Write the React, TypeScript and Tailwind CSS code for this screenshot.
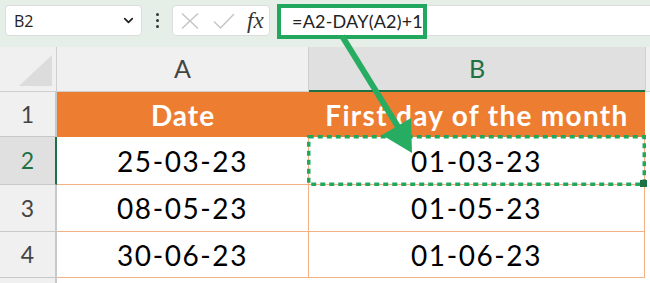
import { ChevronDown } from "lucide-react";

const rows = [
  { n: "3", a: "08-05-23", b: "01-05-23", h: "h-[47px]" },
  { n: "4", a: "30-06-23", b: "01-06-23", h: "h-[46px]" },
];

function Toolbar() {
  return (
    <div className="flex h-[47px] items-start bg-[#e6eee8] pl-[5px] pt-[5px]">
      {/* name box */}
      <div className="flex h-[31px] w-[137px] items-center justify-between rounded-[4px] border border-[#dcdcdc] bg-white pl-[8px] pr-[5px]">
        <span className="font-['Open_Sans',sans-serif] text-[16px] text-[#222]">B2</span>
        <ChevronDown className="h-[15px] w-[15px] text-[#222]" strokeWidth={2.75} />
      </div>
      {/* vertical dots */}
      <div className="flex h-[31px] w-[30px] flex-col items-center justify-center gap-[3px]">
        <span className="h-[3px] w-[3px] rounded-full bg-[#333]" />
        <span className="h-[3px] w-[3px] rounded-full bg-[#333]" />
        <span className="h-[3px] w-[3px] rounded-full bg-[#333]" />
      </div>
      {/* formula buttons */}
      <div className="flex h-[31px] w-[98px] items-center rounded-[4px] border border-[#dcdcdc] bg-white pl-[8px]">
        <svg width="18" height="16" viewBox="0 0 18 16" className="mr-[14px]">
          <path d="M1 0.5 L17 15.5 M17 0.5 L1 15.5" stroke="#c4c4c4" strokeWidth="1.4" fill="none" />
        </svg>
        <svg width="22" height="16" viewBox="0 0 22 16" className="mr-[12px]">
          <path d="M1 8.5 L7.5 15 L21 1" stroke="#c4c4c4" strokeWidth="1.4" fill="none" />
        </svg>
        <span className="font-['Liberation_Serif',serif] text-[23px] italic leading-none text-[#333]">fx</span>
      </div>
      {/* formula input */}
      <div className="relative ml-[8px] flex h-[31px] flex-1 items-center border-y border-[#dcdcdc] bg-white">
        <div className="absolute -top-[2px] left-[-1px] flex h-[35px] w-[150px] items-center border-[4px] border-[#22a85e] pl-[11px]">
          <span className="font-['Lato',sans-serif] text-[18px] tracking-[0.2px] text-[#222]">=A2-DAY(A2)+1</span>
        </div>
      </div>
    </div>
  );
}

function Selection() {
  return (
    <svg className="pointer-events-none absolute -left-[2px] -top-[2px] h-[52px] w-[340px]" viewBox="0 0 340 52">
      <rect x="1.75" y="1.75" width="335.5" height="47.5" fill="none" stroke="#22a85e" strokeWidth="3.5" strokeDasharray="5 4" />
      <rect x="333" y="45" width="7" height="7" fill="#1e7145" />
    </svg>
  );
}

export default function App() {
  return (
    <div className="relative h-[283px] w-[650px] overflow-hidden bg-white">
      <Toolbar />
      <div className="grid grid-cols-[57px_252px_336px_1fr] font-['Lato',sans-serif]">
        {/* column headers */}
        <div className="relative h-[45px] border-r border-b border-[#cfcfcf] bg-[#f0f0f0]">
          <svg className="absolute right-[4px] bottom-[5px]" width="33" height="31" viewBox="0 0 33 31">
            <polygon points="33,0 33,31 0,31" fill="#dcdcdc" />
          </svg>
        </div>
        <div className="flex h-[45px] items-center justify-center border-r border-b border-[#cfcfcf] bg-[#f0f0f0] text-[25px] text-[#444]">
          A
        </div>
        <div className="flex h-[45px] items-center justify-center border-b-[2px] border-[#1e7145] bg-[#e0e0e0] text-[25px] text-[#1e7145]">
          B
        </div>
        <div className="h-[45px] border-b border-l border-[#cfcfcf] bg-[#f0f0f0]" />

        {/* row 1 */}
        <div className="flex h-[45px] items-center justify-center border-r-[2px] border-b border-[#c8c8c8] bg-[#f0f0f0] text-[23px] text-[#444]">
          1
        </div>
        <div className="flex h-[45px] items-center justify-center bg-[#ed7d31] text-[28px] font-bold tracking-[1px] text-white">
          Date
        </div>
        <div className="flex h-[45px] items-center justify-center bg-[#ed7d31] text-[28px] font-bold tracking-[1.3px] text-white">
          First day of the month
        </div>
        <div className="h-[45px] bg-white" />

        {/* row 2 (selected) */}
        <div className="flex h-[48px] items-center justify-center border-r-[2px] border-b border-r-[#1e7145] border-b-[#c8c8c8] bg-[#e0e0e0] text-[23px] text-[#1e7145]">
          2
        </div>
        <div className="flex h-[48px] items-center justify-center border-r border-b border-[#f4b183] text-[28px] tracking-[1.6px] text-black">
          25-03-23
        </div>
        <div className="relative flex h-[48px] items-center justify-center border-r border-b border-[#f4b183] text-[28px] tracking-[1.6px] text-black">
          01-03-23
          <Selection />
        </div>
        <div className="h-[48px] bg-white" />

        {rows.map((r) => (
          <div key={r.n} className="contents">
            <div className={`flex ${r.h} items-center justify-center border-r-[2px] border-b border-[#c8c8c8] bg-[#f0f0f0] text-[23px] text-[#444]`}>
              {r.n}
            </div>
            <div className={`flex ${r.h} items-center justify-center border-r border-b border-[#f4b183] text-[28px] tracking-[1.6px] text-black`}>
              {r.a}
            </div>
            <div className={`flex ${r.h} items-center justify-center border-r border-b border-[#f4b183] text-[28px] tracking-[1.6px] text-black`}>
              {r.b}
            </div>
            <div className={`${r.h} bg-white`} />
          </div>
        ))}

        <div className="h-[5px] border-r-[2px] border-[#c8c8c8] bg-[#f0f0f0]" />
        <div className="h-[5px]" />
        <div className="h-[5px]" />
        <div className="h-[5px]" />
      </div>

      {/* callout arrow */}
      <svg className="pointer-events-none absolute left-0 top-0" width="650" height="283" viewBox="0 0 650 283">
        <line x1="342" y1="36" x2="400" y2="130" stroke="#27ad62" strokeWidth="6" />
        <polygon points="412,153 411,118 382,135" fill="#27ad62" />
      </svg>
    </div>
  );
}
